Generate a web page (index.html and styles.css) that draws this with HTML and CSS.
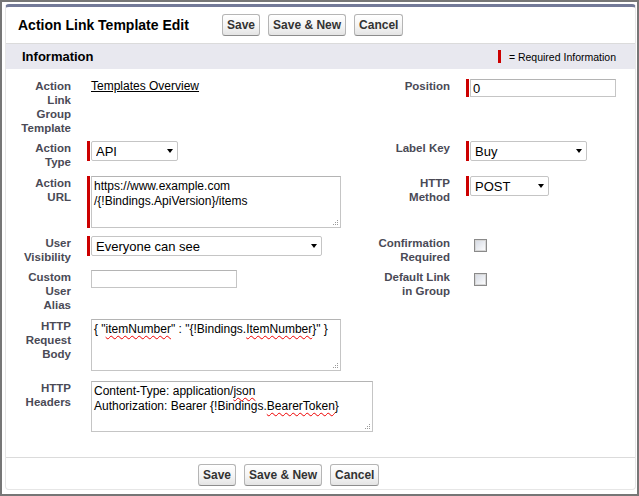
FILE: index.html
```html
<!DOCTYPE html>
<html lang="en">
<head>
    <meta charset="UTF-8">
    <meta name="viewport" content="width=device-width, initial-scale=1.0">
    <title>Action Link Template Edit</title>
    <link rel="stylesheet" href="styles.css">
</head>
<body>
    <div class="frame">
        <div class="block">
            <div class="head">
                <h2 class="title">Action Link Template Edit</h2>
                <div class="btns">
                    <button class="btn">Save</button>
                    <button class="btn">Save &amp; New</button>
                    <button class="btn">Cancel</button>
                </div>
            </div>

            <div class="subhead">
                <h3>Information</h3>
                <span class="legend"><span class="req-mark"></span>= Required Information</span>
            </div>

            <div class="form">
                <!-- row 1 -->
                <label class="lbl lbl-l">Action Link Group Template</label>
                <div class="val"><a class="link" href="#">Templates Overview</a></div>
                <label class="lbl lbl-r">Position</label>
                <div class="val"><span class="req"><input class="txt" type="text" value="0"></span></div>

                <!-- row 2 -->
                <label class="lbl lbl-l">Action Type</label>
                <div class="val"><span class="req"><span class="sel w-api"><select><option>API</option></select></span></span></div>
                <label class="lbl lbl-r">Label Key</label>
                <div class="val"><span class="req"><span class="sel w-buy"><select><option>Buy</option></select></span></span></div>

                <!-- row 3 -->
                <label class="lbl lbl-l">Action URL</label>
                <div class="val"><span class="req"><div class="area w-url">https://www.example.com<br>/{!Bindings.ApiVersion}/items<svg class="grip" width="7" height="7" viewBox="0 0 7 7"><rect x="5" y="1" width="1" height="1"/><rect x="3" y="3" width="1" height="1"/><rect x="5" y="3" width="1" height="1"/><rect x="1" y="5" width="1" height="1"/><rect x="3" y="5" width="1" height="1"/><rect x="5" y="5" width="1" height="1"/></svg></div></span></div>
                <label class="lbl lbl-r">HTTP Method</label>
                <div class="val"><span class="req"><span class="sel w-post"><select><option>POST</option></select></span></span></div>

                <!-- row 4 -->
                <label class="lbl lbl-l">User Visibility</label>
                <div class="val"><span class="req"><span class="sel w-vis"><select><option>Everyone can see</option></select></span></span></div>
                <label class="lbl lbl-r">Confirmation Required</label>
                <div class="val"><input class="chk" type="checkbox"></div>

                <!-- row 5 -->
                <label class="lbl lbl-l">Custom User Alias</label>
                <div class="val"><input class="txt" type="text"></div>
                <label class="lbl lbl-r">Default Link in Group</label>
                <div class="val"><input class="chk" type="checkbox"></div>

                <!-- row 6 -->
                <label class="lbl lbl-l">HTTP Request Body</label>
                <div class="val"><div class="area w-body">{ "<span class="typo">itemNumber</span>" : "{!Bindings.<span class="typo">ItemNumber</span>}" }<svg class="grip" width="7" height="7" viewBox="0 0 7 7"><rect x="5" y="1" width="1" height="1"/><rect x="3" y="3" width="1" height="1"/><rect x="5" y="3" width="1" height="1"/><rect x="1" y="5" width="1" height="1"/><rect x="3" y="5" width="1" height="1"/><rect x="5" y="5" width="1" height="1"/></svg></div></div>

                <!-- row 7 -->
                <label class="lbl lbl-l">HTTP Headers</label>
                <div class="val"><div class="area w-head">Content-Type: application/<span class="typo">json</span><br>Authorization: Bearer {!Bindings.<span class="typo">BearerToken</span>}<svg class="grip" width="7" height="7" viewBox="0 0 7 7"><rect x="5" y="1" width="1" height="1"/><rect x="3" y="3" width="1" height="1"/><rect x="5" y="3" width="1" height="1"/><rect x="1" y="5" width="1" height="1"/><rect x="3" y="5" width="1" height="1"/><rect x="5" y="5" width="1" height="1"/></svg></div></div>
            </div>

            <div class="foot">
                <button class="btn">Save</button>
                <button class="btn">Save &amp; New</button>
                <button class="btn">Cancel</button>
            </div>
        </div>
    </div>
</body>
</html>
```

FILE: styles.css
```css
html, body { margin: 0; }
body { font-family: "Liberation Sans", Arial, sans-serif; background: #fff; color: #000; }

.frame { width: 639px; height: 496px; box-sizing: border-box; border: 2px solid #767676; padding: 2px 0 0 3px; }
.block { width: 631px; box-sizing: border-box; border: 1px solid #e6e6e6; border-top: 3px solid #737a98; border-radius: 4px; background: #fff; }

/* header + buttons */
.head { display: flex; align-items: center; height: 36px; padding-left: 12px; border-bottom: 1px solid #dbdbdb; }
.title { margin: 0; width: 204px; font-size: 14px; font-weight: bold; color: #000; }
.btns { display: flex; gap: 8px; }
.btn { height: 22px; padding: 0 4px; font-family: "Liberation Sans", Arial, sans-serif; font-size: 12px; font-weight: bold; color: #333; border: 1px solid #b5b5b5; border-bottom-color: #8c8c8c; border-radius: 3px; background: linear-gradient(#fff, #f4f4f4 55%, #e4e4e4); }

.subhead { display: flex; align-items: center; justify-content: space-between; height: 25px; padding: 0 19px 0 16px; background: #e8e8ef; }
.subhead h3 { margin: 0; font-size: 13px; font-weight: bold; color: #000; }
.legend { display: flex; align-items: center; font-size: 10.5px; color: #000; }
.req-mark { width: 3px; height: 13px; background: #c00; margin-right: 8px; }

/* form grid */
.form { display: grid; grid-template-columns: 65px 257px 90px 1fr; grid-template-rows: 62px 35px 60px 34px 49px 62px 51px; column-gap: 16px; margin: 10px 0 25px; }
.lbl { font-size: 11.5px; line-height: 14px; font-weight: bold; color: #4a4a56; text-align: right; }
.lbl-l { grid-column: 1; padding-left: 12px; }
.lbl-r { grid-column: 3; padding-left: 17px; }
.val { padding-left: 4px; font-size: 12px; line-height: 14px; }
.link { color: #000; text-decoration: underline; }

.req { display: inline-flex; align-items: stretch; margin-left: -4px; vertical-align: top; }
.req::before { content: ""; width: 3px; margin-right: 1px; background: #c00; }

.txt { display: block; width: 146px; height: 18px; box-sizing: border-box; margin: 0; padding: 0 2px; border: 1px solid #c5c5c5; border-top-color: #b4b4b4; font-family: "Liberation Sans", Arial, sans-serif; font-size: 13px; color: #000; }

.sel { position: relative; display: block; }
.sel select { display: block; width: 100%; height: 20px; margin: 0; padding: 0 16px 0 4px; appearance: none; border: 1px solid #c5c5c5; border-radius: 2px; background: #fff; font-family: "Liberation Sans", Arial, sans-serif; font-size: 13px; color: #000; }
.sel::after { content: ""; position: absolute; right: 5px; top: 8px; border-left: 3.5px solid transparent; border-right: 3.5px solid transparent; border-top: 4px solid #000; }
.w-api { width: 87px; }
.w-buy { width: 117px; }
.w-post { width: 79px; }
.w-vis { width: 231px; }

.area { position: relative; box-sizing: border-box; height: 52px; padding: 2px; border: 1px solid #c5c5c5; border-top-color: #b4b4b4; font-size: 12px; line-height: 15px; color: #000; }
.w-url { width: 250px; }
.w-body { width: 250px; }
.w-head { width: 282px; height: 51px; }
.grip { position: absolute; right: 1px; bottom: 1px; fill: #9a9a9a; }
.typo { text-decoration: underline wavy #e00; text-decoration-thickness: 1px; text-underline-offset: 2px; }

.chk { appearance: none; display: block; width: 13px; height: 13px; margin: 3px 0 0 4px; border: 1px solid #8a8a8a; box-shadow: inset 0 0 0 1px #d6d6d6; background: linear-gradient(135deg, #d3d8e2, #fff); }

.foot { display: flex; gap: 8px; padding: 6px 0 3px 192px; border-top: 1px solid #dbdbdb; }
```
